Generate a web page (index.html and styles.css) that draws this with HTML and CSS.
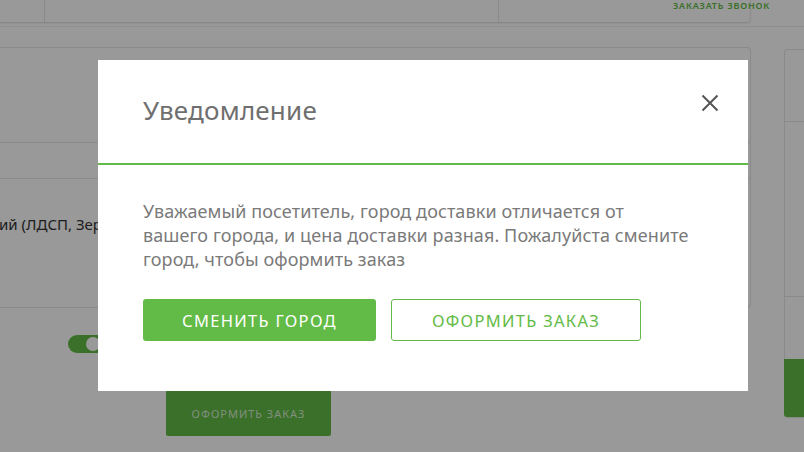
FILE: index.html
```html
<!DOCTYPE html>
<html lang="ru">
<head>
<meta charset="utf-8">
<title>Уведомление</title>
<link rel="stylesheet" href="styles.css">
</head>
<body>
<div class="page">
  <div class="top">
    <div class="header">
      <div class="h-cell h-logo"></div>
      <div class="h-cell h-mid"></div>
      <div class="h-cell h-right"></div>
    </div>
    <div class="callback">ЗАКАЗАТЬ ЗВОНОК</div>
  </div>
  <div class="strip"></div>
  <div class="content">
    <div class="main">
      <div class="card">
        <div class="card-row r1"></div>
        <div class="card-row r2"></div>
        <div class="card-row r3"><span class="item">ий (ЛДСП, Зер</span></div>
      </div>
      <div class="below">
        <div class="toggle-row"><span class="toggle"><span class="knob"></span></span></div>
        <div class="btn-row"><button class="order-btn">ОФОРМИТЬ ЗАКАЗ</button></div>
      </div>
    </div>
    <div class="side">
      <div class="side-card">
        <div class="side-row s1"></div>
        <div class="side-row s2"></div>
        <div class="side-row s3"></div>
        <div class="side-btn"></div>
      </div>
    </div>
  </div>
</div>
<div class="overlay"></div>
<div class="modal">
  <div class="modal-head">
    <h2 class="modal-title">Уведомление</h2>
    <button class="close" aria-label="Закрыть">
      <svg width="20" height="20" viewBox="0 0 20 20"><path d="M2.5 2.5 L17.5 17.5 M17.5 2.5 L2.5 17.5" stroke="#555" stroke-width="2" fill="none"/></svg>
    </button>
  </div>
  <div class="modal-body">
    <p class="msg">Уважаемый посетитель, город доставки отличается от<br>вашего города, и цена доставки разная. Пожалуйста смените<br>город, чтобы оформить заказ</p>
    <div class="actions">
      <button class="btn btn-fill">СМЕНИТЬ ГОРОД</button>
      <button class="btn btn-line">ОФОРМИТЬ ЗАКАЗ</button>
    </div>
  </div>
</div>
</body>
</html>
```

FILE: styles.css
```css
* { box-sizing: border-box; }
html, body { margin: 0; padding: 0; }
body {
  width: 804px;
  height: 452px;
  overflow: hidden;
  background: #fff;
  font-family: "Noto Sans", "Open Sans", sans-serif;
  color: #333;
}
.page { width: 804px; }
.top { display: flex; height: 23px; }
.header {
  width: 751px;
  height: 23px;
  flex-shrink: 0;
  display: flex;
  border-bottom: 1px solid #e2e2e2;
  border-right: 1px solid #ececec;
  border-bottom-right-radius: 4px;
  box-shadow: 0 1px 2px rgba(0,0,0,0.06);
}
.h-logo { width: 45px; border-right: 1px solid #e6e6e6; }
.h-mid { width: 454px; border-right: 1px solid #e6e6e6; }
.h-right { flex: 1; }
.callback {
  flex-shrink: 0;
  margin-left: -78px;
  font-size: 9px;
  line-height: 12px;
  letter-spacing: 0.8px;
  color: #62bb46;
  font-weight: 600;
  white-space: nowrap;
  height: 12px;
}
.strip { height: 4px; border-bottom: 1px solid #ececec; }
.content { display: flex; margin-top: 20px; }
.main { width: 751px; }
.card {
  height: 261px;
  border: 1px solid #e6e6e6;
  border-left: none;
  border-radius: 0 4px 4px 0;
  display: flex;
  flex-direction: column;
}
.card-row { border-bottom: 1px solid #e6e6e6; }
.r1 { height: 95px; }
.r2 { height: 36px; }
.r3 { flex: 1; border-bottom: none; padding-top: 34px; }
.item { font-size: 15px; color: #333; margin-left: -1px; }
.below { padding-top: 27px; }
.toggle-row { padding-left: 68px; height: 55px; }
.toggle {
  display: block;
  width: 42px;
  height: 18px;
  border-radius: 9px;
  background: #62bb46;
  position: relative;
}
.knob {
  position: absolute;
  top: 2px;
  left: 18px;
  width: 14px;
  height: 14px;
  border-radius: 50%;
  background: #fff;
}
.btn-row { padding-left: 166px; }
.order-btn {
  width: 165px;
  height: 46px;
  border: none;
  border-radius: 2px;
  background: #62bb46;
  color: rgba(255,255,255,0.75);
  font-family: inherit;
  font-size: 11px;
  letter-spacing: 1px;
}
.side { margin-left: 33px; padding-top: 2px; flex: 1; }
.side-card {
  border: 1px solid #e6e6e6;
  border-right: none;
  border-radius: 4px 0 0 4px;
  height: 369px;
  display: flex;
  flex-direction: column;
}
.side-row { border-bottom: 1px solid #e6e6e6; }
.s1 { height: 72px; }
.s2 { height: 175px; }
.s3 { height: 62px; border-bottom: none; }
.side-btn { flex: 1; background: #62bb46; margin-left: -1px; border-bottom-left-radius: 3px; }

.overlay {
  position: fixed;
  inset: 0;
  background: rgba(0,0,0,0.4);
}
.modal {
  position: absolute;
  left: 98px;
  top: 60px;
  width: 650px;
  height: 331px;
  background: #fff;
  display: flex;
  flex-direction: column;
}
.modal-head {
  height: 105px;
  border-bottom: 2px solid #62bb46;
  display: flex;
  align-items: flex-start;
  justify-content: space-between;
  padding: 31px 28px 0 45px;
}
.modal-title {
  margin: 0;
  font-size: 26px;
  font-weight: 400;
  color: #6f6f6f;
  line-height: 38px;
  letter-spacing: 0.2px;
}
.close {
  border: none;
  background: none;
  padding: 0;
  margin-top: 2px;
  width: 20px;
  height: 20px;
  cursor: pointer;
}
.close svg { display: block; }
.modal-body { padding: 34px 45px 0 45px; }
.msg {
  margin: 0;
  font-size: 18px;
  line-height: 24px;
  color: #7a7a7a;
  letter-spacing: 0.1px;
  white-space: nowrap;
}
.actions { display: flex; gap: 15px; margin-top: 28px; }
.btn {
  height: 42px;
  border-radius: 3px;
  font-family: inherit;
  font-size: 16.5px;
  letter-spacing: 1.3px;
  cursor: pointer;
}
.btn-fill {
  width: 233px;
  border: none;
  background: #62bb46;
  color: #fff;
}
.btn-line {
  width: 250px;
  border: 1px solid #62bb46;
  background: #fff;
  color: #62bb46;
}
```
